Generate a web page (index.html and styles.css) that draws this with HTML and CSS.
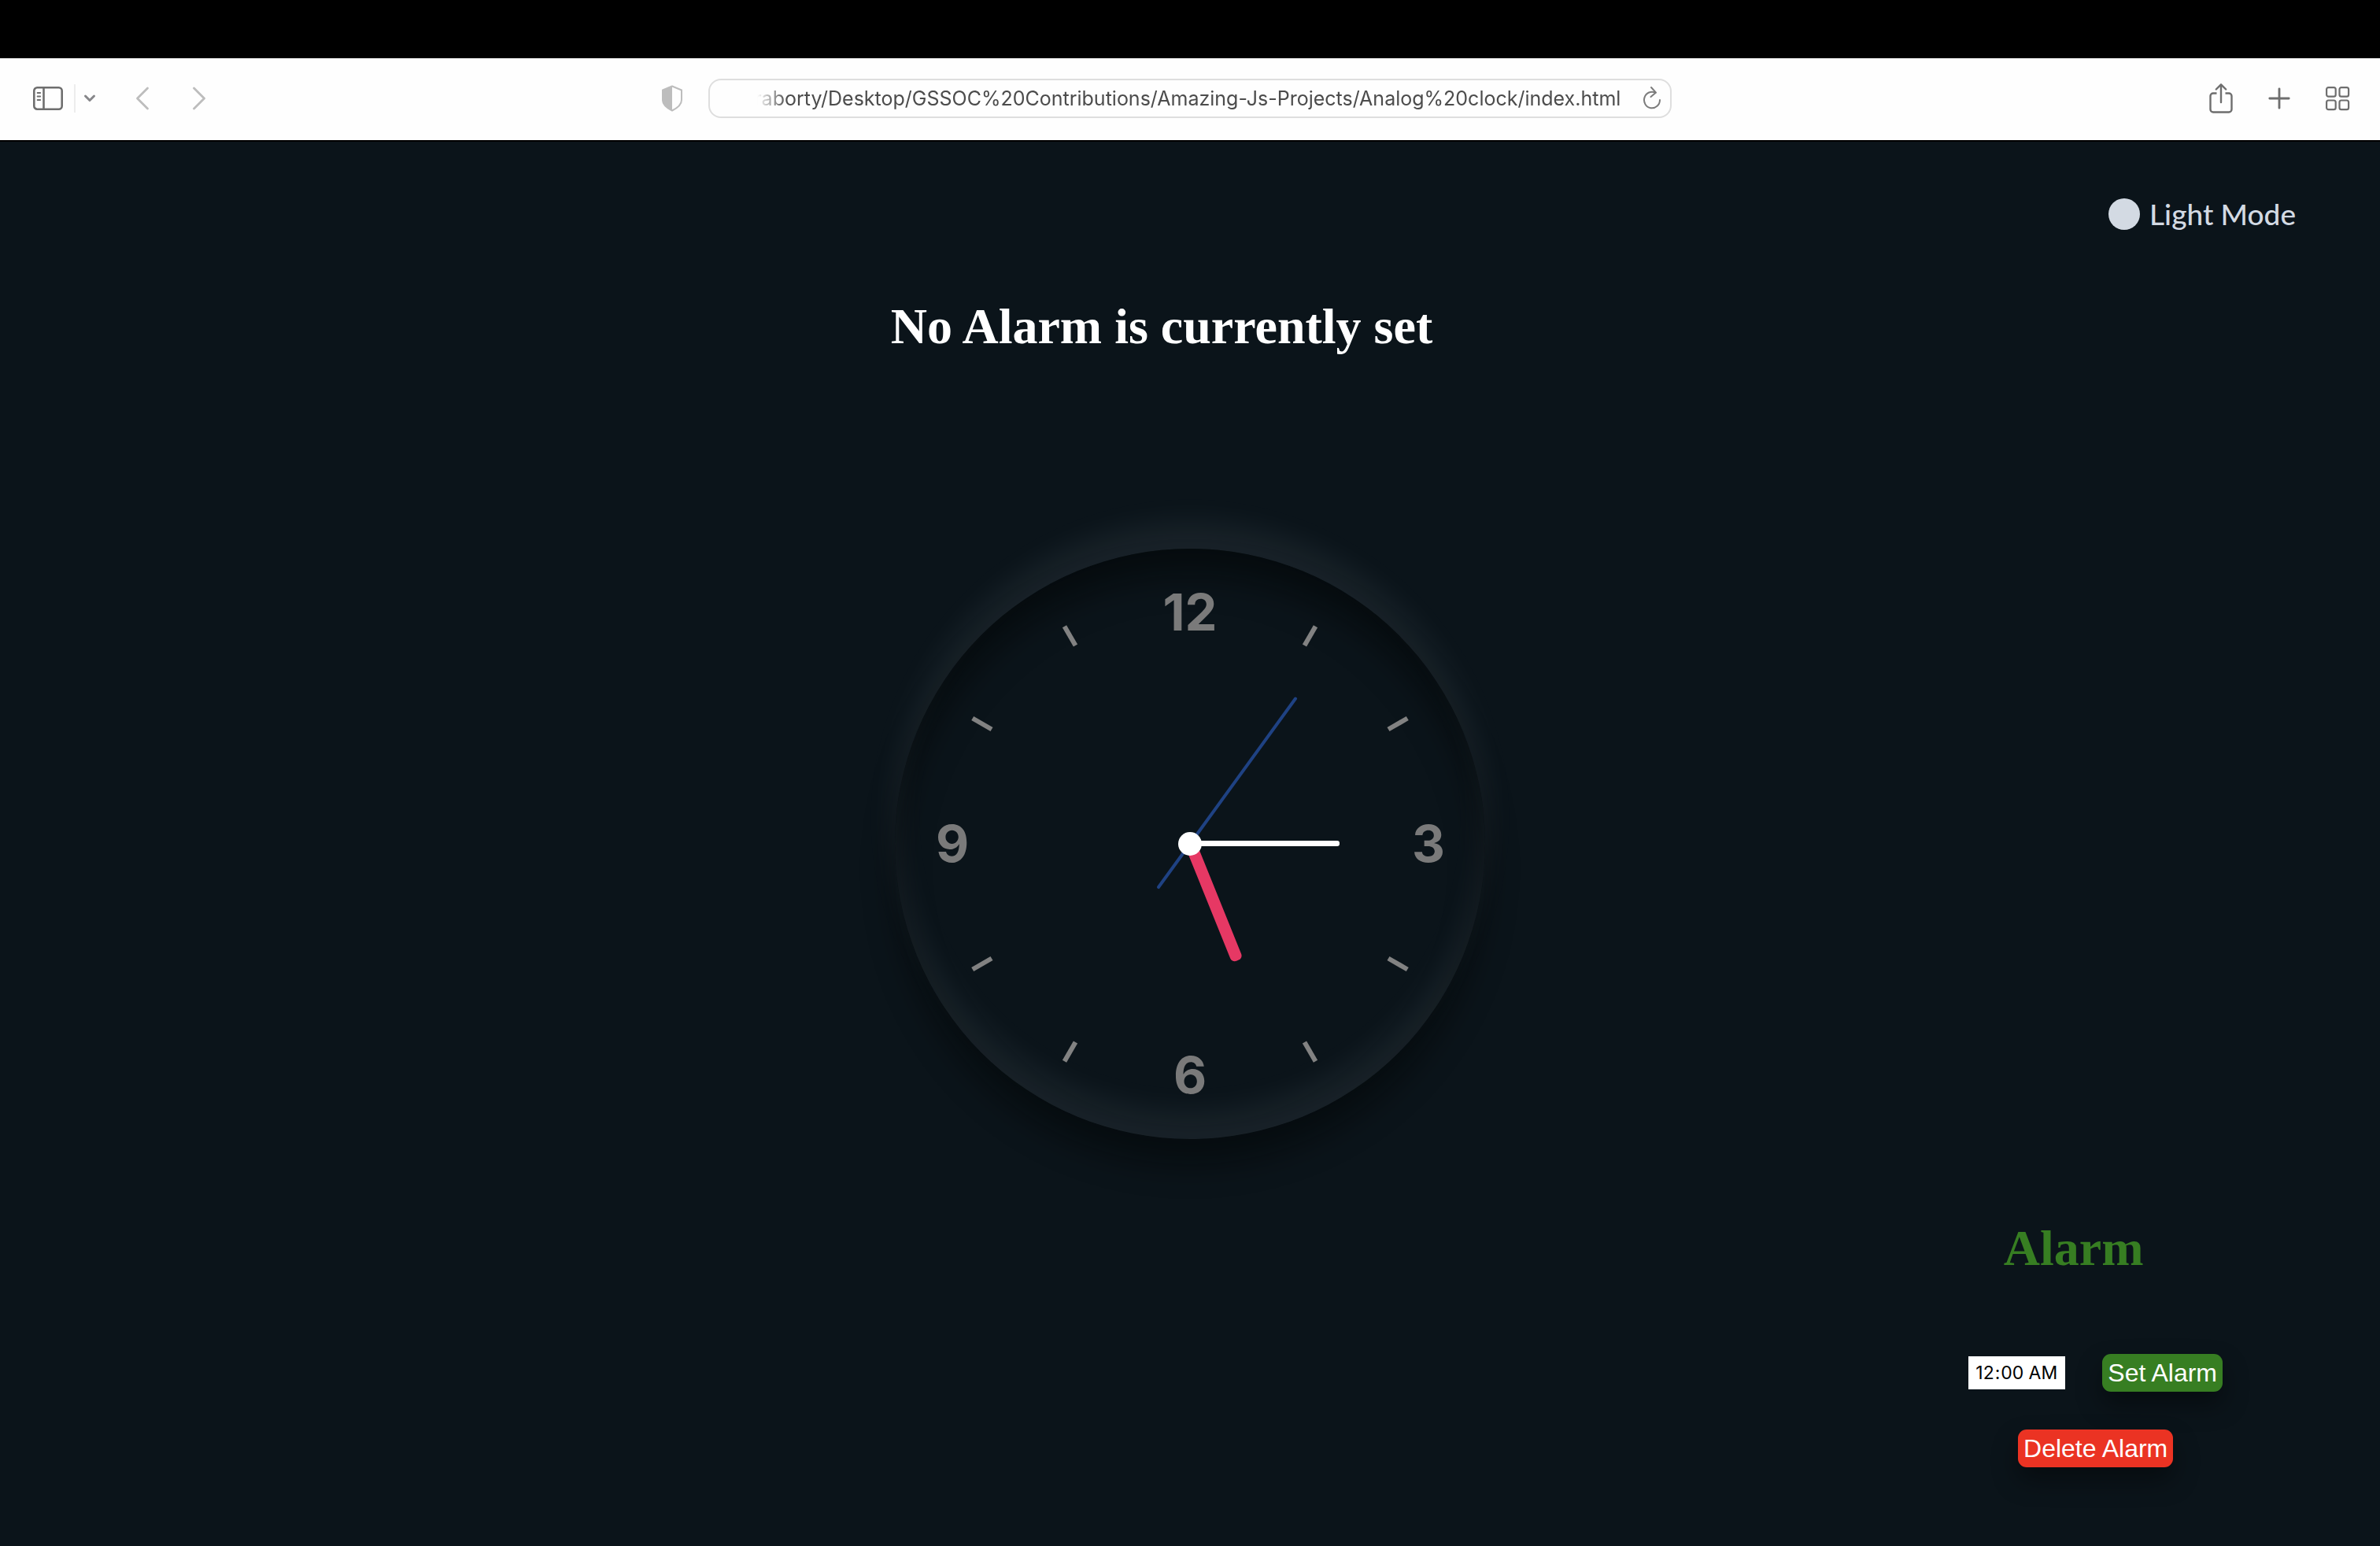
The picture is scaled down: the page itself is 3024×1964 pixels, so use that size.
FILE: index.html
```html
<!DOCTYPE html>
<html lang="en-US">
<head>
<meta charset="utf-8">
<title>Analog clock</title>
<link rel="stylesheet" href="styles.css">
</head>
<body>
<div class="menubar"></div>
<header class="toolbar">
  <div class="group group-left">
    <button class="tool" aria-label="Sidebar">
      <svg width="40" height="32" viewBox="0 0 40 32" fill="none" stroke="#6e6e6e" stroke-width="2.6" stroke-linecap="round"><rect x="2.3" y="2.3" width="35.4" height="27.4" rx="4"/><path d="M14.5 2.5v27"/><path d="M6.6 9h3.6M6.6 13.5h3.6M6.6 18h3.6" stroke-width="1.8"/></svg>
    </button>
    <span class="divider"></span>
    <button class="tool tool-menu" aria-label="Tab groups">
      <svg width="18" height="12" viewBox="0 0 18 12" fill="none" stroke="#87878a" stroke-width="3" stroke-linecap="round" stroke-linejoin="round"><path d="M3.5 3l5.5 5.5L14.5 3"/></svg>
    </button>
    <button class="tool tool-back" aria-label="Back">
      <svg width="20" height="32" viewBox="0 0 20 32" fill="none" stroke="#bdbdbd" stroke-width="2.8" stroke-linecap="round" stroke-linejoin="round"><path d="M16.5 3L3.5 16l13 13"/></svg>
    </button>
    <button class="tool tool-forward" aria-label="Forward">
      <svg width="20" height="32" viewBox="0 0 20 32" fill="none" stroke="#bdbdbd" stroke-width="2.8" stroke-linecap="round" stroke-linejoin="round"><path d="M3.5 3L16.5 16l-13 13"/></svg>
    </button>
  </div>
  <div class="address-area">
    <button class="tool tool-shield" aria-label="Privacy report">
      <svg width="28" height="34" viewBox="0 0 28 34"><path d="M14 1.5L26 6.5V19c0 6-5 10-12 13.5C7 29 2 25 2 19V6.5z" fill="none" stroke="#bdbdbd" stroke-width="2" stroke-linejoin="round"/><path d="M14 1L1.5 6.5V19c0 6 5.5 10.5 12.5 14z" fill="#bdbdbd"/></svg>
    </button>
    <div class="address">
      <input class="url" type="text" aria-label="Address" value="raborty/Desktop/GSSOC%20Contributions/Amazing-Js-Projects/Analog%20clock/index.html">
      <button class="tool" aria-label="Reload">
        <svg width="24" height="36" viewBox="0 0 24 36" fill="none" stroke="#7c7c7c" stroke-width="2" stroke-linecap="round" stroke-linejoin="round"><path d="M16.5 10.8A10 10.3 0 1 0 22 20"/><path d="M11 4l6 6.6-6.5 5.4"/></svg>
      </button>
    </div>
  </div>
  <div class="group group-right">
    <button class="tool" aria-label="Share">
      <svg width="32" height="40" viewBox="0 0 32 40" fill="none" stroke="#6e6e6e" stroke-width="2.4" stroke-linecap="round" stroke-linejoin="round"><path d="M10.5 13.5H6A3.5 3.5 0 0 0 2.5 17v17A3.5 3.5 0 0 0 6 37.5h20a3.5 3.5 0 0 0 3.500-3.500V17A3.500 3.500 0 0 0 26 13.500h-4.500" stroke-linecap="butt"/><path d="M16 25V2.500M9.800 8.500L16 2.300l6.200 6.200"/></svg>
    </button>
    <button class="tool" aria-label="New tab">
      <svg width="30" height="30" viewBox="0 0 30 30" stroke="#6e6e6e" stroke-width="2.8" stroke-linecap="round"><path d="M15 2.8v24.4M2.8 15h24.4"/></svg>
    </button>
    <button class="tool" aria-label="Tab overview">
      <svg width="32" height="32" viewBox="0 0 32 32" fill="none" stroke="#6e6e6e" stroke-width="2.2"><rect x="2.1" y="2.1" width="11.6" height="11.6" rx="2.4"/><rect x="18.5" y="2.1" width="11.6" height="11.6" rx="2.4"/><rect x="2.1" y="18.5" width="11.6" height="11.6" rx="2.4"/><rect x="18.5" y="18.5" width="11.6" height="11.6" rx="2.4"/></svg>
    </button>
  </div>
</header>
<main class="page">
  <div class="top">
    <button class="mode"><span class="mode-dot"></span>Light Mode</button>
    <h1 class="title">No Alarm is currently set</h1>
  </div>
  <div class="clock">
    <svg class="dial" viewBox="-375 -375 750 750" role="img" aria-label="Clock">
      <g class="numbers">
        <text x="0" y="-271">12</text>
        <text x="303" y="23">3</text>
        <text x="0" y="317">6</text>
        <text x="-302" y="23">9</text>
      </g>
      <g class="ticks">
        <path d="M0-319V-291" transform="rotate(30)"/>
        <path d="M0-319V-291" transform="rotate(60)"/>
        <path d="M0-319V-291" transform="rotate(120)"/>
        <path d="M0-319V-291" transform="rotate(150)"/>
        <path d="M0-319V-291" transform="rotate(210)"/>
        <path d="M0-319V-291" transform="rotate(240)"/>
        <path d="M0-319V-291" transform="rotate(300)"/>
        <path d="M0-319V-291" transform="rotate(330)"/>
      </g>
      <rect class="hour" x="-8" y="-160" width="15" height="160" rx="6" transform="rotate(158)"/>
      <rect class="minute" x="-4" y="-190" width="7" height="190" rx="3" transform="rotate(90)"/>
      <rect class="second" x="-2" y="-230" width="4" height="300" rx="2" transform="rotate(36)"/>
      <circle class="hub" r="15"/>
    </svg>
  </div>
  <form class="alarm" onsubmit="return false">
    <h2 class="alarm-title">Alarm</h2>
    <div class="alarm-row">
      <input class="time" type="time" value="00:00" aria-label="Alarm time">
      <button class="btn btn-set">Set Alarm</button>
    </div>
    <button class="btn btn-delete" type="button">Delete Alarm</button>
  </form>
</main>
</body>
</html>
```
FILE: styles.css
```css
* { box-sizing: border-box; }
body {
  margin: 0;
  min-height: 100vh;
  display: flex;
  flex-direction: column;
  background: #0b141a;
  font-family: Inter, "Liberation Sans", sans-serif;
}
button { margin: 0; padding: 0; border: 0; background: none; font: inherit; }
svg { display: block; }

.menubar { height: 74px; background: #000; }
.toolbar {
  height: 106px;
  padding: 0 38px 2px 41px;
  display: grid;
  grid-template-columns: 1fr auto 1fr;
  align-items: center;
  background: #fefefe;
  border-bottom: 2px solid #000;
}
.group { display: flex; align-items: center; }
.divider { width: 2px; height: 36px; margin: 0 9px 0 13px; background: #ededed; }
.tool-back { margin-left: 48px; }
.tool-forward { margin-left: 52px; }
.group-right { justify-content: flex-end; gap: 43px; }
.address-area { display: flex; align-items: center; gap: 32px; margin-right: 63px; }
.address {
  width: 40.5vw;
  height: 50px;
  padding: 0 11px 0 50px;
  display: flex;
  align-items: center;
  gap: 28px;
  border: 2px solid #dedede;
  border-radius: 16px;
}
.url {
  flex: 1;
  min-width: 0;
  padding: 0;
  border: 0;
  outline: 0;
  background: none;
  color: #4c4c4c;
  font: 400 25px/32px Inter, sans-serif;
  text-align: right;
  -webkit-mask-image: linear-gradient(90deg, transparent 10px, #000 48px);
  mask-image: linear-gradient(90deg, transparent 10px, #000 48px);
}

.page {
  flex: 1;
  display: grid;
  grid-template-rows: 1fr auto 1fr;
}
.top { padding-top: 70px; display: flex; flex-direction: column; }
.mode {
  align-self: flex-end;
  margin-right: 107px;
  display: flex;
  align-items: center;
  gap: 12px;
  color: #d3dae3;
  font: 500 37px/44px Lato, sans-serif;
}
.mode-dot { width: 40px; height: 40px; border-radius: 50%; background: #d3dae3; }
.title, .alarm-title {
  margin: 0;
  font: 700 64px/72px "Liberation Serif", serif;
}
.title { margin-top: 85px; padding-right: 72px; color: #fff; text-align: center; }

.clock {
  justify-self: center;
  width: 750px;
  border-radius: 50%;
  box-shadow: 0 -32px 40px rgba(225, 240, 255, .07),
    inset 0 -32px 40px rgba(225, 240, 255, .07),
    0 32px 40px rgba(0, 4, 4, .45),
    inset 0 32px 40px rgba(0, 4, 4, .5);
}
.numbers { fill: #7a7a7a; font: 700 65px Inter, sans-serif; text-anchor: middle; }
.ticks { stroke: #828282; stroke-width: 6; }
.hour { fill: #e63864; }
.minute, .hub { fill: #fff; }
.second { fill: #1f4283; }

.alarm {
  justify-self: end;
  align-self: end;
  padding: 0 200px 100px 0;
  display: flex;
  flex-direction: column;
  align-items: center;
}
.alarm-title { margin: 0 56px 98px 0; color: #377e22; }
.alarm-row { display: flex; align-items: center; gap: 47px; margin-bottom: 48px; }
.time {
  width: 123px;
  height: 42px;
  padding: 0 8px;
  border: 0;
  border-radius: 0;
  background: #fff;
  color: #000;
  font: 400 23px/42px Inter, sans-serif;
}
.time::-webkit-calendar-picker-indicator { display: none; }
.btn {
  height: 48px;
  padding: 0 7px;
  border-radius: 11px;
  color: #fff;
  font: 400 32px/48px "Liberation Sans", sans-serif;
  box-shadow: 0 16px 32px rgba(0, 0, 0, .4);
}
.btn-set { background: #377e22; }
.btn-delete { background: #eb3323; }
```
